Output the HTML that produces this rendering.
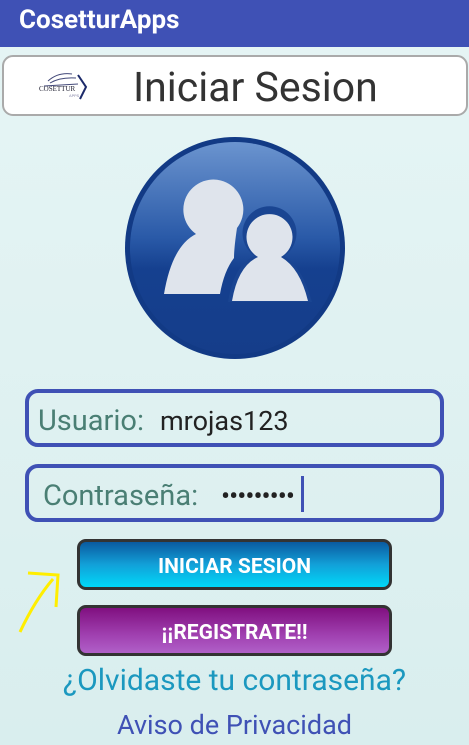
<!DOCTYPE html>
<html><head><meta charset="utf-8"><style>
*{margin:0;padding:0;box-sizing:border-box}
body{width:469px;height:745px;overflow:hidden;background:linear-gradient(180deg,#e6f5f5,#d9eeee);font-family:Roboto,"Liberation Sans",sans-serif;position:relative}
.hdr{position:absolute;left:0;top:0;width:469px;height:47px;background:#3F51B5;color:#fff;font-size:26px;font-weight:bold;padding:5px 0 0 19px}
.tbox{position:absolute;left:2px;top:55px;width:466px;height:61px;border:2px solid #aaa;border-radius:11px;background:#fff}
.tbox span{position:absolute;left:129px;top:7px;font-size:41px;color:#333}
.in{position:absolute;left:25px;width:419px;height:58px;border:4.5px solid #3F51B5;border-radius:13px;font-size:29px}
.lab{position:absolute;top:11px;color:#4a7f74}
.val{position:absolute;top:12px;color:#222;font-size:27px}
.btn{position:absolute;left:77px;width:315px;height:51px;border:3px solid #333;border-radius:9px;color:#fff;font-weight:bold;font-size:21px;text-align:center;line-height:50px}
.t{position:absolute;left:0;width:469px;text-align:center}
</style></head><body>
<div class="hdr">CosetturApps</div>
<div class="tbox">
<svg style="position:absolute;left:32px;top:12px" width="52" height="34" viewBox="0 0 52 34">
<path d="M12 12 Q22 3 36 5 M14 14 Q24 8 40 9 M8 17 L42 15" stroke="#444a7a" stroke-width="1" fill="none"/>
<text x="3" y="22" font-size="7" fill="#223" font-family="Liberation Serif">COSETTUR</text>
<path d="M42 6 L50 18 L44 30" stroke="#1c2a6a" stroke-width="2" fill="none"/>
<text x="33" y="28" font-size="4" fill="#88a">APPS</text>
</svg>
<span>Iniciar Sesion</span></div>
<svg style="position:absolute;left:124px;top:136px" width="222" height="224" viewBox="0 0 222 224">
<defs><linearGradient id="g" x1="0" y1="0" x2="0" y2="1"><stop offset="0" stop-color="#6b94cf"/><stop offset=".45" stop-color="#2a5aa8"/><stop offset=".6" stop-color="#15408f"/><stop offset="1" stop-color="#153d8a"/></linearGradient></defs>
<ellipse cx="111" cy="112" rx="110" ry="111" fill="#123a85"/>
<ellipse cx="111" cy="112" rx="105" ry="106" fill="url(#g)"/>
<path d="M40 158 Q48 110 72 98 A30 30 0 1 1 113 92 Q110 112 110 122 Q100 135 96 158 Z" fill="#dfe4ec"/>
<path d="M104 166 Q110 128 131 120 A27 27 0 1 1 160 120 Q178 130 188 166 Z" fill="#1a4592"/>
<path d="M108 165 Q114 130 134 121 A23 23 0 1 1 157 121 Q176 132 184 165 Z" fill="#dfe4ec"/>
</svg>
<div class="in" style="top:389px"><span class="lab" style="left:9px">Usuario:</span><span class="val" style="left:131px">mrojas123</span></div>
<div class="in" style="top:464px"><span class="lab" style="left:14px">Contraseña:</span><span class="val" style="left:192px;top:12px;letter-spacing:-1px">•••••••••</span><span style="position:absolute;left:272px;top:8px;width:3px;height:36px;background:#3F51B5"></span></div>
<div class="btn" style="top:539px;background:linear-gradient(#0a5aa0,#12a0d8 50%,#00d8f8)">INICIAR SESION</div>
<div class="btn" style="top:605px;background:linear-gradient(#801080,#a040b0 60%,#b060c8)">¡¡REGISTRATE!!</div>
<svg style="position:absolute;left:15px;top:565px" width="50" height="70"><path d="M5 67 Q20 35 38 14 M13 8 L43 10 L41 42" stroke="#ffee00" stroke-width="3" fill="none"/></svg>
<div class="t" style="top:663px;font-size:30px;color:#1b98bf">¿Olvidaste tu contraseña?</div>
<div class="t" style="top:709px;font-size:27px;color:#3F51B5">Aviso de Privacidad</div>
</body></html>
